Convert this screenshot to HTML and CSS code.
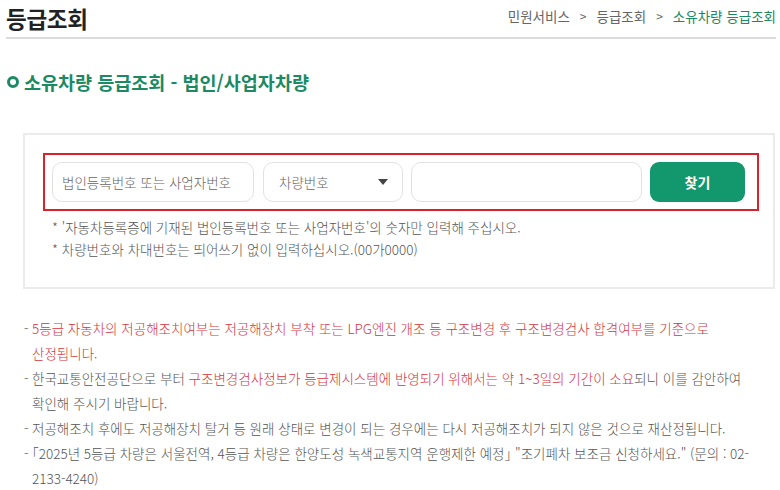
FILE: index.html
```html
<!DOCTYPE html>
<html lang="ko">
<head>
<meta charset="utf-8">
<title>등급조회</title>
<link rel="stylesheet" href="styles.css">
</head>
<body>
<div class="page">
  <header class="page-head">
    <h1 class="page-title">등급조회</h1>
    <nav class="crumbs">
      <span>민원서비스</span><span class="sep">&gt;</span><span>등급조회</span><span class="sep">&gt;</span><span class="current">소유차량 등급조회</span>
    </nav>
  </header>

  <h2 class="section-title"><span class="ring"></span>소유차량 등급조회 - 법인/사업자차량</h2>

  <section class="search-box">
    <div class="search-row">
      <div class="field field-reg">법인등록번호 또는 사업자번호</div>
      <div class="field field-select">차량번호<span class="caret"></span></div>
      <div class="field field-num"></div>
      <button class="btn-find" type="button">찾기</button>
    </div>
    <ul class="hints">
      <li>* '자동차등록증에 기재된 법인등록번호 또는 사업자번호'의 숫자만 입력해 주십시오.</li>
      <li>* 차량번호와 차대번호는 띄어쓰기 없이 입력하십시오.(00가0000)</li>
    </ul>
  </section>

  <ul class="notice">
    <li><span class="dash">-</span><p class="txt"><span class="red">5등급 자동차의 저공해조치여부는 저공해장치 부착 또는 LPG엔진 개조 등 구조변경 후 구조변경검사 합격여부를 기준으로 산정됩니다.</span></p></li>
    <li><span class="dash">-</span><p class="txt">한국교통안전공단으로 부터 <span class="red">구조변경검사정보가 등급제시스템에 반영되기 위해서는 약 1~3일의 기간이 소요</span>되니 이를 감안하여 확인해 주시기 바랍니다.</p></li>
    <li><span class="dash">-</span><p class="txt">저공해조치 후에도 저공해장치 탈거 등 원래 상태로 변경이 되는 경우에는 다시 저공해조치가 되지 않은 것으로 재산정됩니다.</p></li>
    <li><span class="dash">-</span><p class="txt"><span class="brk">「</span>2025년 5등급 차량은 서울전역, 4등급 차량은 한양도성 녹색교통지역 운행제한 예정<span class="brk">」</span> "조기폐차 보조금 신청하세요." (문의 : 02-<wbr>2133-4240)</p></li>
  </ul>
</div>
</body>
</html>
```

FILE: styles.css
```css
* { box-sizing: border-box; }
html, body { margin: 0; padding: 0; background: #fff; }
body {
  font-family: "Noto Sans CJK KR", "Noto Sans", sans-serif;
  color: #555;
  font-size: 13.5px;
  word-break: keep-all;
}
.page { width: 780px; padding: 0 4px 0 6px; }

.page-head {
  display: flex;
  justify-content: space-between;
  align-items: center;
  height: 39px;
  border-bottom: 2px solid #dcdcdc;
  padding-bottom: 2px;
}
.page-title {
  margin: 0;
  font-size: 22.5px;
  font-weight: 700;
  color: #222;
  line-height: 28px;
  letter-spacing: -0.3px;
}
.crumbs {
  font-size: 13.5px;
  color: #666;
  display: flex;
  align-items: center;
  margin-top: -4px;
}
.crumbs .sep { margin: 0 10px; font-size: 12px; }
.crumbs .current { color: #1b8a63; }

.section-title {
  margin: 30px 0 0 1px;
  height: 26px;
  display: flex;
  align-items: center;
  font-size: 18.5px;
  font-weight: 700;
  color: #1b8a63;
}
.ring {
  width: 12px;
  height: 12px;
  border: 3px solid #1b8a63;
  border-radius: 50%;
  margin-right: 5px;
}

.search-box {
  margin: 38px 0 0 17px;
  width: 752px;
  border: 2px solid #ebebeb;
  padding: 18px 14px 27px 18px;
}
.search-row {
  display: flex;
  gap: 9px;
  border: 2px solid #d8222e;
  padding: 7px 10px 7px 7px;
}
.field {
  height: 40px;
  border: 1px solid #e2e2e2;
  border-radius: 10px;
  display: flex;
  align-items: center;
  padding: 0 9px;
  color: #666;
  font-size: 13.5px;
  font-weight: 300;
}
.field-reg { width: 202px; }
.field-select { width: 140px; justify-content: space-between; padding: 0 14px 0 15px; }
.field-num { width: 231px; margin-left: -1px; }
.caret {
  width: 0; height: 0;
  border-left: 5px solid transparent;
  border-right: 5px solid transparent;
  border-top: 6px solid #444;
}
.btn-find {
  width: 95px;
  height: 40px;
  border: 0;
  border-radius: 9px;
  background: #13976c;
  color: #fff;
  font-family: inherit;
  font-size: 14px;
  font-weight: 700;
  margin-left: -1px;
}
.hints {
  list-style: none;
  margin: 5px 0 0 9px;
  padding: 0;
  line-height: 22px;
  font-size: 13.5px;
  font-weight: 300;
  color: #555;
}

.notice {
  list-style: none;
  margin: 27px 0 0 18px;
  padding: 0;
  width: 742px;
  line-height: 25px;
  font-size: 13.5px;
  font-weight: 300;
  color: #555;
}
.notice li {
  display: flex;
}
.notice .dash { width: 8px; flex: none; }
.notice .txt { margin: 0; flex: 1; }
.notice .red { color: #d5353d; }
.notice .brk { font-feature-settings: "halt"; }
```
